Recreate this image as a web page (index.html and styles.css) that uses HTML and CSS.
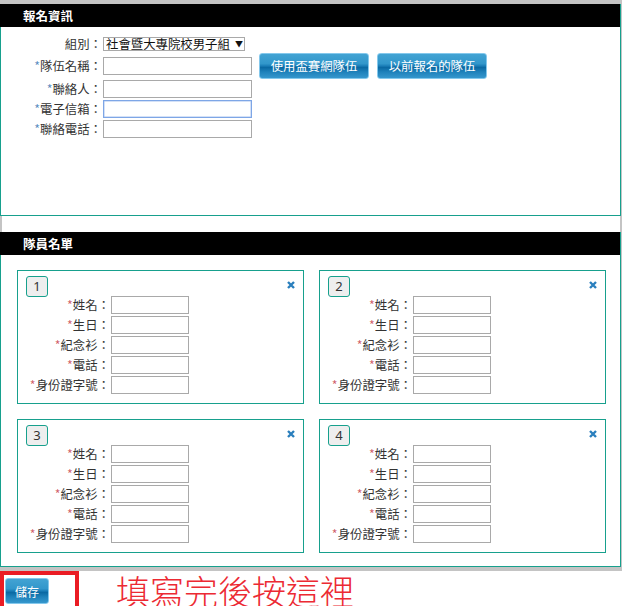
FILE: index.html
```html
<!DOCTYPE html>
<html lang="zh-Hant">
<head>
<meta charset="utf-8">
<title>報名</title>
<link rel="stylesheet" href="styles.css">
</head>
<body>
<div class="wrap">
  <section class="panel panel-info">
    <h2 class="panel-head">報名資訊</h2>
    <div class="form">
      <div class="row row-select">
        <label class="lbl">組別：</label>
        <span class="select-box"><select class="select"><option>社會暨大專院校男子組</option></select><span class="arrow">▼</span></span>
      </div>
      <div class="row row-team">
        <label class="lbl"><span class="req">*</span>隊伍名稱：</label>
        <input class="inp" type="text">
        <button class="btn btn-first">使用盃賽網隊伍</button>
        <button class="btn btn-second">以前報名的隊伍</button>
      </div>
      <div class="row">
        <label class="lbl"><span class="req">*</span>聯絡人：</label>
        <input class="inp" type="text">
      </div>
      <div class="row">
        <label class="lbl"><span class="req">*</span>電子信箱：</label>
        <input class="inp inp-focus" type="text">
      </div>
      <div class="row">
        <label class="lbl"><span class="req">*</span>聯絡電話：</label>
        <input class="inp" type="text">
      </div>
    </div>
  </section>
  <div class="spacer"></div>
  <section class="panel panel-members">
    <h2 class="panel-head">隊員名單</h2>
    <div class="cards">
      <div class="card">
        <div class="card-top"><span class="badge">1</span><svg class="close" width="8" height="8" viewBox="0 0 8 8"><path d="M1 1L7 7M7 1L1 7" stroke="#2a7fbd" stroke-width="2.4" stroke-linecap="butt"/></svg></div>
        <div class="frow"><label class="flbl"><span class="req2">*</span>姓名：</label><input class="finp" type="text"></div>
        <div class="frow"><label class="flbl"><span class="req2">*</span>生日：</label><input class="finp" type="text"></div>
        <div class="frow"><label class="flbl"><span class="req2">*</span>紀念衫：</label><input class="finp" type="text"></div>
        <div class="frow"><label class="flbl"><span class="req2">*</span>電話：</label><input class="finp" type="text"></div>
        <div class="frow"><label class="flbl"><span class="req2">*</span>身份證字號：</label><input class="finp" type="text"></div>
      </div>
      <div class="card">
        <div class="card-top"><span class="badge">2</span><svg class="close" width="8" height="8" viewBox="0 0 8 8"><path d="M1 1L7 7M7 1L1 7" stroke="#2a7fbd" stroke-width="2.4" stroke-linecap="butt"/></svg></div>
        <div class="frow"><label class="flbl"><span class="req2">*</span>姓名：</label><input class="finp" type="text"></div>
        <div class="frow"><label class="flbl"><span class="req2">*</span>生日：</label><input class="finp" type="text"></div>
        <div class="frow"><label class="flbl"><span class="req2">*</span>紀念衫：</label><input class="finp" type="text"></div>
        <div class="frow"><label class="flbl"><span class="req2">*</span>電話：</label><input class="finp" type="text"></div>
        <div class="frow"><label class="flbl"><span class="req2">*</span>身份證字號：</label><input class="finp" type="text"></div>
      </div>
      <div class="card">
        <div class="card-top"><span class="badge">3</span><svg class="close" width="8" height="8" viewBox="0 0 8 8"><path d="M1 1L7 7M7 1L1 7" stroke="#2a7fbd" stroke-width="2.4" stroke-linecap="butt"/></svg></div>
        <div class="frow"><label class="flbl"><span class="req2">*</span>姓名：</label><input class="finp" type="text"></div>
        <div class="frow"><label class="flbl"><span class="req2">*</span>生日：</label><input class="finp" type="text"></div>
        <div class="frow"><label class="flbl"><span class="req2">*</span>紀念衫：</label><input class="finp" type="text"></div>
        <div class="frow"><label class="flbl"><span class="req2">*</span>電話：</label><input class="finp" type="text"></div>
        <div class="frow"><label class="flbl"><span class="req2">*</span>身份證字號：</label><input class="finp" type="text"></div>
      </div>
      <div class="card">
        <div class="card-top"><span class="badge">4</span><svg class="close" width="8" height="8" viewBox="0 0 8 8"><path d="M1 1L7 7M7 1L1 7" stroke="#2a7fbd" stroke-width="2.4" stroke-linecap="butt"/></svg></div>
        <div class="frow"><label class="flbl"><span class="req2">*</span>姓名：</label><input class="finp" type="text"></div>
        <div class="frow"><label class="flbl"><span class="req2">*</span>生日：</label><input class="finp" type="text"></div>
        <div class="frow"><label class="flbl"><span class="req2">*</span>紀念衫：</label><input class="finp" type="text"></div>
        <div class="frow"><label class="flbl"><span class="req2">*</span>電話：</label><input class="finp" type="text"></div>
        <div class="frow"><label class="flbl"><span class="req2">*</span>身份證字號：</label><input class="finp" type="text"></div>
      </div>
    </div>
  </section>
</div>
<div class="footer">
  <div class="save-box"><button class="btn btn-save">儲存</button></div>
  <p class="hint">填寫完後按這裡</p>
</div>
</body>
</html>
```

FILE: styles.css
```css
* { box-sizing: border-box; }

html, body {
  margin: 0;
  padding: 0;
  background: #fff;
}

body {
  font-family: "Noto Sans", "Noto Sans CJK TC", sans-serif;
  font-size: 12px;
  color: #333;
  width: 629px;
  overflow: hidden;
}

.wrap {
  width: 622px;
  background: #c4c4c4;
  padding: 4px 1px 4px 0;
}

.panel {
  background: #fff;
  border: 1px solid #17a08d;
  border-top: none;
}

.panel-info { height: 212px; }
.panel-members { height: 335px; }

.panel-head {
  margin: 0;
  height: 23px;
  background: #000;
  color: #fff;
  font-family: "Noto Sans CJK TC", sans-serif;
  font-weight: 700;
  font-size: 12.5px;
  line-height: 23px;
  padding-left: 23px;
  margin-left: -1px;
}

.spacer {
  height: 16px;
  background: #fff;
  margin: 0 1px 0 2px;
}

/* ---------- info form ---------- */
.form {
  padding-top: 10px;
}

.row {
  display: flex;
  align-items: center;
  height: 18px;
  margin-bottom: 2px;
}

.row-select { height: 14px; margin-bottom: 2px; }
.row-team { height: 26px; margin-bottom: 1px; }

.lbl {
  width: 101px;
  text-align: right;
  font-family: "Noto Sans CJK TC", sans-serif;
  font-size: 12.4px;
  color: #333;
  line-height: 18px;
}

.req { color: #5a8cc0; }
.req2 { color: #d0606a; }

.select-box {
  display: inline-flex;
  align-items: center;
  width: 142px;
  height: 14px;
  border: 1px solid #a9a9a9;
  background: #fff;
  margin-left: 1px;
}

.select {
  appearance: none;
  -webkit-appearance: none;
  border: none;
  background: transparent;
  font-family: "Noto Sans CJK TC", sans-serif;
  font-size: 12.4px;
  color: #111;
  padding: 0 0 0 2px;
  margin: 0;
  height: 12px;
  line-height: 12px;
  width: 130px;
  outline: none;
}

.arrow {
  font-size: 8px;
  color: #111;
  line-height: 12px;
  margin-left: 1px;
}

.inp {
  width: 149px;
  height: 18px;
  border: 1px solid #a9a9a9;
  margin: 0 0 0 1px;
  padding: 0 2px;
  background: #fff;
}

.inp-focus {
  border-color: #7ea6e6;
  box-shadow: inset 0 0 0 0.5px #a9c4f0;
}

.btn {
  height: 26px;
  border: 1px solid #84c8ec;
  border-radius: 3px;
  background: linear-gradient(#42a3d3 0%, #3297cb 40%, #1a7db7 50%, #0a69a3 56%, #1f82bb 75%, #3597cd 100%);
  color: #fff;
  font-family: "Noto Sans CJK TC", sans-serif;
  font-size: 12.4px;
  padding: 0;
  cursor: pointer;
}

.btn-first { width: 110px; margin-left: 7px; }
.btn-second { width: 110px; margin-left: 8px; }

/* ---------- members ---------- */
.cards {
  display: grid;
  grid-template-columns: 287px 287px;
  column-gap: 15px;
  row-gap: 15px;
  padding: 15px 0 0 16px;
}

.card {
  height: 134px;
  border: 1px solid #17a08d;
  padding: 5px 8px 0 8px;
}

.card-top {
  display: flex;
  justify-content: space-between;
  align-items: flex-start;
  height: 20px;
}

.badge {
  display: inline-block;
  width: 22px;
  height: 21px;
  border: 1px solid #17a08d;
  border-radius: 3px;
  background: #eeeeee;
  text-align: center;
  font-family: "Noto Sans", sans-serif;
  font-size: 13px;
  line-height: 19px;
  color: #333;
}

.close {
  margin-top: 5px;
  display: block;
}

.frow {
  display: flex;
  align-items: center;
  height: 18px;
  margin-bottom: 2px;
  margin-left: -8px;
}

.flbl {
  width: 92px;
  text-align: right;
  font-family: "Noto Sans CJK TC", sans-serif;
  font-size: 12.4px;
  color: #333;
  line-height: 18px;
}

.finp {
  width: 78px;
  height: 18px;
  border: 1px solid #a9a9a9;
  margin-left: 1px;
  padding: 0 2px;
  background: #fff;
}

/* ---------- footer ---------- */
.footer {
  display: flex;
  align-items: flex-start;
  height: 36px;
}

.save-box {
  width: 79px;
  height: 40px;
  border: 4px solid #ea1c24;
  border-bottom: none;
  padding: 3px 0 0 1px;
}

.btn-save {
  width: 44px;
  height: 26px;
  font-size: 12px;
}

.hint {
  margin: 0 0 0 37px;
  font-family: "Noto Sans CJK TC", sans-serif;
  font-weight: 300;
  font-size: 34px;
  line-height: 40px;
  color: #ec2a33;
  letter-spacing: 0;
}
```
